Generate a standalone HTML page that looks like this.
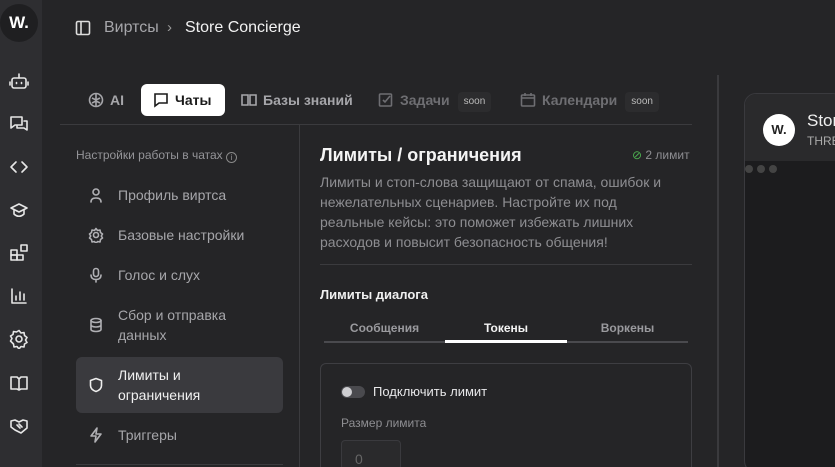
<!DOCTYPE html>
<html style="width:835px;height:467px;overflow:hidden"><head><meta charset="utf-8"><style>
*{box-sizing:border-box;margin:0;padding:0}
body{width:835px;height:467px;overflow:hidden;background:#252527;font-family:"Liberation Sans",sans-serif;color:#e8e8ea;position:relative}
.abs{position:absolute}
.rail{left:0;top:0;width:42px;height:467px;background:#2e2e31}
.rail svg{position:absolute;left:9px;width:20px;height:20px;stroke:#e6e6e6;fill:none;stroke-width:1.6;stroke-linecap:round;stroke-linejoin:round}
.logo{left:0;top:4px;width:38px;height:38px;border-radius:50%;background:#1f1f21;color:#fff;font-weight:bold;font-size:17px;text-align:center;line-height:38px}
.tab{top:84px;height:32px;line-height:32px;font-size:14px;font-weight:bold;color:#a6a6aa}
.tab svg{width:16px;height:16px;stroke:currentColor;fill:none;stroke-width:1.6;vertical-align:-3px;margin-right:6px}
.soon{display:inline-block;background:#2c2c2e;color:#bbb;font-size:10px;font-weight:normal;padding:0 6px;line-height:20px;border-radius:4px;margin-left:8px;vertical-align:1px}
.nav{left:76px;width:207px;font-size:14px;color:#a6a6aa;line-height:20px}
.nav svg{position:absolute;left:12px;width:16px;height:16px;stroke:#b0b0b4;fill:none;stroke-width:1.6;stroke-linecap:round;stroke-linejoin:round}
.nav span{position:absolute;left:42px}
</style></head><body>
<div class="abs rail">
<div class="abs logo">W.</div>
<svg style="top:71px" viewBox="0 0 20 20"><rect x="3" y="7" width="14" height="10" rx="2"/><path d="M10 3v4M7.5 11.5v1M12.5 11.5v1M1 11v3M19 11v3"/></svg>
<svg style="top:114px" viewBox="0 0 20 20"><path d="M2 3h11v8H6l-4 3z"/><path d="M15 7h3v9l-3-2H8v-2"/></svg>
<svg style="top:157px" viewBox="0 0 20 20"><path d="M7 5l-5 5 5 5M13 5l5 5-5 5"/></svg>
<svg style="top:200px" viewBox="0 0 20 20"><path d="M2 8l8-4 8 4-8 4z"/><path d="M5 10v4c3 3 7 3 10 0v-4"/></svg>
<svg style="top:243px" viewBox="0 0 20 20"><rect x="2" y="7" width="6" height="5"/><rect x="2" y="12" width="6" height="5"/><rect x="8" y="12" width="6" height="5"/><rect x="12" y="2" width="6" height="6"/></svg>
<svg style="top:286px" viewBox="0 0 20 20"><path d="M3 3v14h14M7 14v-4M11 14V6M15 14v-6"/></svg>
<svg style="top:329px" viewBox="0 0 20 20"><circle cx="10" cy="10" r="3"/><path d="M10 1.5l2 2.5 3-.5.5 3 2.5 2-1.5 2.5 1.5 2.5-2.5 1.5-.5 3-3-.5-2 2.5-2-2.5-3 .5-.5-3L1.5 12 3 9.5 1.5 7 4 5.5l.5-3 3 .5z"/></svg>
<svg style="top:373px" viewBox="0 0 20 20"><path d="M2 4h6l2 2 2-2h6v12h-6l-2 1-2-1H2zM10 6v11"/></svg>
<svg style="top:416px" viewBox="0 0 20 20"><path d="M2 5l4-1 4 2 4-2 4 1v7l-6 5-6-3-4-3z"/><path d="M8 9l3 3M10 8l3 3"/></svg>
</div>
<svg class="abs" style="left:75px;top:20px" width="16" height="16" viewBox="0 0 16 16" fill="none" stroke="#ddd" stroke-width="1.6"><rect x="1.5" y="1.5" width="13" height="13" rx="1.5"/><path d="M6 2v12"/></svg>
<div class="abs" style="left:104px;top:19px;font-size:16px;color:#a6a6aa">Виртсы</div>
<div class="abs" style="left:167px;top:19px;font-size:15px;color:#999">›</div>
<div class="abs" style="left:185px;top:19px;font-size:16px;color:#f2f2f2">Store Concierge</div>

<div class="abs tab" style="left:88px"><svg viewBox="0 0 16 16"><circle cx="8" cy="8" r="6.5"/><path d="M8 2v12M4 6l4 2 4-2M4 11l4-2 4 2"/></svg>AI</div>
<div class="abs tab" style="left:141px;width:84px;background:#fff;color:#1a1a1a;border-radius:6px;padding-left:12px"><svg viewBox="0 0 16 16"><path d="M2 2h12v9H6l-4 3z"/></svg>Чаты</div>
<div class="abs tab" style="left:241px"><svg viewBox="0 0 16 16"><path d="M1 3h6v10H1zM9 3h6v10H9z"/></svg>Базы знаний</div>
<div class="abs tab" style="left:378px;color:#6e6e72"><svg viewBox="0 0 16 16"><rect x="1.5" y="2" width="12" height="12" rx="1"/><path d="M5 8l2 2 5-6"/></svg>Задачи<span class="soon">soon</span></div>
<div class="abs tab" style="left:520px;color:#6e6e72"><svg viewBox="0 0 16 16"><rect x="1.5" y="3" width="13" height="11" rx="1"/><path d="M1.5 6h13M5 1v3M11 1v3"/></svg>Календари<span class="soon">soon</span></div>

<div class="abs" style="left:60px;top:124px;width:632px;height:1px;background:#3b3b3e"></div>
<div class="abs" style="left:299px;top:124px;width:1px;height:343px;background:#3b3b3e"></div>
<div class="abs" style="left:717px;top:75px;width:2px;height:392px;background:#3a3a3d"></div>

<div class="abs" style="left:76px;top:148px;font-size:12px;color:#949498">Настройки работы в чатах <span style="display:inline-block;width:11px;height:11px;border:1px solid #888;border-radius:50%;font-size:8px;text-align:center;line-height:9px;vertical-align:-1px">i</span></div>
<div class="abs nav" style="top:185px;height:20px"><svg viewBox="0 0 16 16" style="top:2px"><circle cx="8" cy="5" r="3"/><path d="M3 15c0-3 2-4 5-4s5 1 5 4"/></svg><span>Профиль виртса</span></div>
<div class="abs nav" style="top:225px;height:20px"><svg viewBox="0 0 16 16" style="top:2px"><circle cx="8" cy="8" r="2.5"/><path d="M8 1.5l1.5 2 2.5-.5.5 2.5 2 1.5-1.2 2 1.2 2-2 1.5-.5 2.5-2.5-.5-1.5 2-1.5-2-2.5.5-.5-2.5-2-1.5 1.2-2-1.2-2 2-1.5.5-2.5 2.5.5z"/></svg><span>Базовые настройки</span></div>
<div class="abs nav" style="top:265px;height:20px"><svg viewBox="0 0 16 16" style="top:2px"><rect x="5.5" y="1.5" width="5" height="8" rx="2.5"/><path d="M3 8c0 3 2 4.5 5 4.5s5-1.5 5-4.5M8 12.5V15"/></svg><span>Голос и слух</span></div>
<div class="abs nav" style="top:305px;height:40px"><svg viewBox="0 0 16 16" style="top:12px"><ellipse cx="8" cy="3.5" rx="5" ry="2"/><path d="M3 3.5v9c0 1 2 2 5 2s5-1 5-2v-9M3 8c0 1 2 2 5 2s5-1 5-2"/></svg><span>Сбор и отправка<br>данных</span></div>
<div class="abs nav" style="top:357px;height:56px;background:#3a3a3e;border-radius:6px;color:#f0f0f0"><svg viewBox="0 0 16 16" style="top:20px;stroke:#eee"><path d="M8 1.5l5.5 2v5c0 3-2.5 5-5.5 6-3-1-5.5-3-5.5-6v-5z"/></svg><span style="top:8px">Лимиты и<br>ограничения</span></div>
<div class="abs nav" style="top:425px;height:20px"><svg viewBox="0 0 16 16" style="top:2px"><path d="M9 1L3 9h5l-1 6 6-8H8z"/></svg><span>Триггеры</span></div>
<div class="abs" style="left:76px;top:464px;width:207px;height:1px;background:#3b3b3e"></div>

<div class="abs" style="left:320px;top:145px;font-size:18px;font-weight:bold;color:#f4f4f4">Лимиты / ограничения</div>
<div class="abs" style="left:632px;top:148px;font-size:12px;color:#8e8e92"><span style="color:#4caf50">⊘</span> 2 лимит</div>
<div class="abs" style="left:320px;top:172px;width:400px;font-size:14px;line-height:20px;color:#8e8e92;white-space:nowrap">Лимиты и стоп-слова защищают от спама, ошибок и<br>нежелательных сценариев. Настройте их под<br>реальные кейсы: это поможет избежать лишних<br>расходов и повысит безопасность общения!</div>
<div class="abs" style="left:320px;top:264px;width:372px;height:1px;background:#3b3b3e"></div>
<div class="abs" style="left:320px;top:287px;font-size:13px;font-weight:bold;color:#f0f0f0">Лимиты диалога</div>
<div class="abs" style="left:324px;top:341px;width:364px;height:2px;background:#4a4a4e"></div>
<div class="abs" style="left:445px;top:340px;width:122px;height:3px;background:#fff"></div>
<div class="abs" style="left:324px;top:321px;width:121px;text-align:center;font-size:12px;font-weight:bold;color:#9a9a9e">Сообщения</div>
<div class="abs" style="left:445px;top:321px;width:122px;text-align:center;font-size:12px;font-weight:bold;color:#f4f4f4">Токены</div>
<div class="abs" style="left:567px;top:321px;width:121px;text-align:center;font-size:12px;font-weight:bold;color:#9a9a9e">Воркены</div>
<div class="abs" style="left:320px;top:363px;width:372px;height:110px;border:1px solid #3e3e42;border-radius:6px"></div>
<div class="abs" style="left:341px;top:386px;width:24px;height:12px;border-radius:6px;background:#4a4a4e"><div style="position:absolute;left:1px;top:1px;width:10px;height:10px;border-radius:50%;background:#cfcfd2"></div></div>
<div class="abs" style="left:373px;top:384px;font-size:13px;color:#e8e8ea">Подключить лимит</div>
<div class="abs" style="left:341px;top:416px;font-size:12px;color:#8e8e92">Размер лимита</div>
<div class="abs" style="left:341px;top:440px;width:60px;height:30px;border:1px solid #3a3a3e;border-radius:4px;background:#2a2a2c;color:#666;font-size:14px;padding:10px 13px">0</div>

<div class="abs" style="left:744px;top:93px;width:100px;height:380px;border:1px solid #3a3a3e;border-radius:12px;background:#1c1c1e;overflow:hidden">
<div style="height:67px;background:#2a2a2c"></div>
</div>
<div class="abs" style="left:763px;top:114px;width:32px;height:32px;border-radius:50%;background:#fff;color:#222;font-weight:bold;font-size:13px;text-align:center;line-height:32px">W.</div>
<div class="abs" style="left:807px;top:111px;font-size:17px;color:#f0f0f0">Store</div>
<div class="abs" style="left:807px;top:134px;font-size:12px;color:#aaa">THREE</div>
<div class="abs" style="left:745px;top:165px;width:40px;height:8px"><span style="position:absolute;left:0;width:8px;height:8px;border-radius:50%;background:#444"></span><span style="position:absolute;left:12px;width:8px;height:8px;border-radius:50%;background:#444"></span><span style="position:absolute;left:24px;width:8px;height:8px;border-radius:50%;background:#444"></span></div>
</body></html>
